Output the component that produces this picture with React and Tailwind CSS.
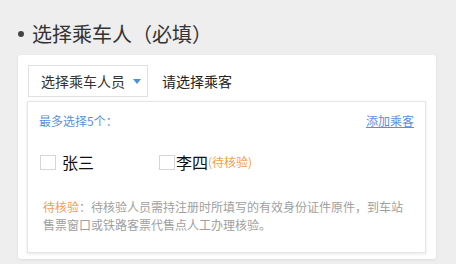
import React from "react";

const FONT = { fontFamily: '"Noto Sans CJK SC", "Noto Sans", sans-serif' };

const passengers = [
  { name: "张三", pending: false },
  { name: "李四", pending: true },
];

export default function App() {
  return (
    <div className="w-[456px] h-[264px] overflow-hidden bg-[#eeeeee] text-[#333]" style={FONT}>
      {/* title */}
      <div className="flex items-center pl-[18px] pt-[20px] h-[48px]">
        <span className="w-[6px] h-[6px] rounded-full bg-[#444]" />
        <h2 className="ml-[8px] text-[20px] leading-[28px] font-normal text-[#333]">
          选择乘车人（必填）
        </h2>
      </div>

      <div className="mt-[7px] ml-[18px] w-[418px] bg-white rounded-[3px] shadow-[0_1px_3px_rgba(0,0,0,0.08)] pt-[10px] pl-[10px] pr-[10px] pb-[6px]">
        {/* select row */}
        <div className="flex items-center">
          <div className="flex items-center w-[120px] h-[32px] border border-[#e0e0e0] pl-[12px] bg-white">
            <span className="text-[14px] leading-[20px] text-[#333]">选择乘车人员</span>
            <svg width="8" height="5" viewBox="0 0 8 5" className="ml-[8px]">
              <path d="M0 0 L8 0 L4 5 Z" fill="#4a90d9" />
            </svg>
          </div>
          <span className="ml-[14px] text-[14px] leading-[20px] text-[#222]">请选择乘客</span>
        </div>

        {/* dropdown panel */}
        <div className="mt-[4px] -ml-[1px] w-[399px] border border-[#e6e6e6] shadow-[0_1px_3px_rgba(0,0,0,0.1)] bg-white px-[11px] pt-[10px] pb-[18px]">
          <div className="flex items-center justify-between h-[18px]">
            <span className="text-[12px] leading-[18px] text-[#5b8fdc]">最多选择5个：</span>
            <a className="text-[12px] leading-[18px] text-[#5b8fdc] underline">添加乘客</a>
          </div>

          <div className="flex items-center mt-[20px] h-[24px] pl-[1px]">
            {passengers.map((p) => (
              <label key={p.name} className="flex items-center w-[119px]">
                <span className="w-[16px] h-[15px] border border-[#d6d6d6] bg-white" />
                <span className={p.pending ? "ml-[1px] text-[16px] leading-[24px] text-[#111]" : "ml-[6px] text-[16px] leading-[24px] text-[#111]"}>
                  {p.name}
                </span>
                {p.pending && (
                  <span className="text-[12px] leading-[24px] text-[#f0a050] whitespace-nowrap">(待核验)</span>
                )}
              </label>
            ))}
          </div>

          <p className="mt-[24px] pl-[4px] pr-[2px] text-[12px] leading-[18px] text-[#a0a0a0]">
            <span className="text-[#f0a050]">待核验</span>：待核验人员需持注册时所填写的有效身份证件原件，到车站售票窗口或铁路客票代售点人工办理核验。
          </p>
        </div>
      </div>
    </div>
  );
}
